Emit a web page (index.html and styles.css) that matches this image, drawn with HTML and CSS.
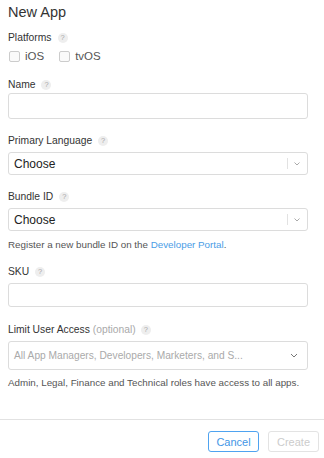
FILE: index.html
```html
<!DOCTYPE html>
<html>
<head>
<meta charset="utf-8">
<link rel="stylesheet" href="styles.css">
</head>
<body>
<div class="page">
  <div class="form">
    <h1 class="title">New App</h1>

    <div class="label label-platforms">Platforms <span class="help">?</span></div>
    <div class="checks">
      <label class="check"><span class="box"></span>iOS</label>
      <label class="check"><span class="box"></span>tvOS</label>
    </div>

    <div class="label">Name <span class="help">?</span></div>
    <div class="input input-name"></div>

    <div class="label">Primary Language <span class="help">?</span></div>
    <div class="select">
      <span class="value">Choose</span>
      <span class="sep"></span>
      <svg class="chev" width="6" height="4" viewBox="0 0 6 4"><polyline points="0.5,0.5 3,3 5.5,0.5" fill="none" stroke="#aaa" stroke-width="1"/></svg>
    </div>

    <div class="label">Bundle ID <span class="help">?</span></div>
    <div class="select">
      <span class="value">Choose</span>
      <span class="sep"></span>
      <svg class="chev" width="6" height="4" viewBox="0 0 6 4"><polyline points="0.5,0.5 3,3 5.5,0.5" fill="none" stroke="#aaa" stroke-width="1"/></svg>
    </div>
    <p class="note note-bundle">Register a new bundle ID on the <a class="link">Developer Portal</a>.</p>

    <div class="label label-sku">SKU <span class="help">?</span></div>
    <div class="input input-sku"></div>

    <div class="label label-limit">Limit User Access <span class="optional">(optional)</span> <span class="help">?</span></div>
    <div class="select select-multi">
      <span class="placeholder">All App Managers, Developers, Marketers, and S...</span>
      <svg class="chev chev-dark" width="8" height="5" viewBox="0 0 8 5"><polyline points="1,1 4,4 7,1" fill="none" stroke="#777" stroke-width="1"/></svg>
    </div>
    <p class="note note-admin">Admin, Legal, Finance and Technical roles have access to all apps.</p>
  </div>

  <div class="footer">
    <button class="btn btn-cancel">Cancel</button>
    <button class="btn btn-create">Create</button>
  </div>
</div>
</body>
</html>
```

FILE: styles.css
```css
html, body {
  margin: 0;
  padding: 0;
  background: #fff;
}
body {
  font-family: "Liberation Sans", Arial, sans-serif;
  color: #333;
  width: 324px;
  height: 458px;
  overflow: hidden;
}
.page {
  display: flex;
  flex-direction: column;
}
.form {
  padding-left: 8px;
  width: 300px;
}
.title {
  margin: 0;
  padding-top: 3px;
  font-size: 14.5px;
  font-weight: normal;
  line-height: 18px;
  color: #333;
}
.label {
  display: flex;
  align-items: center;
  font-size: 10.3px;
  line-height: 14px;
  height: 14px;
  color: #333;
  margin-top: 15px;
}
.label-platforms { margin-top: 10px; }
.label-sku { margin-top: 13px; }
.label-limit { margin-top: 16px; }
.help {
  display: inline-flex;
  align-items: center;
  justify-content: center;
  width: 10px;
  height: 10px;
  border-radius: 50%;
  background: #eee;
  color: #a8a8a8;
  font-size: 7.5px;
  line-height: 10px;
  margin-left: 6px;
}
.optional {
  color: #aaa;
  margin-left: 3px;
  margin-right: -1px;
}
.checks {
  display: flex;
  gap: 14px;
  margin-top: 4px;
  height: 14px;
  align-items: center;
}
.check {
  display: flex;
  align-items: center;
  font-size: 11.5px;
  color: #555;
}
.box {
  width: 9px;
  height: 9px;
  border: 1px solid #ccc;
  border-radius: 2px;
  background: #fafafa;
  margin-left: 1px;
  margin-right: 5px;
}
.input {
  box-sizing: border-box;
  width: 300px;
  border: 1px solid #dcdcdc;
  border-radius: 3px;
  background: #fff;
}
.input-name {
  height: 26px;
  margin-top: 1px;
}
.input-sku {
  height: 24px;
  margin-top: 4px;
}
.select {
  box-sizing: border-box;
  width: 300px;
  height: 23px;
  margin-top: 4px;
  border: 1px solid #dcdcdc;
  border-radius: 3px;
  display: flex;
  align-items: center;
  padding-left: 5px;
}
.value {
  flex: 1;
  font-size: 12px;
  color: #222;
}
.sep {
  width: 1px;
  height: 11px;
  background: #e2e2e2;
  margin-right: 6px;
}
.chev {
  margin-right: 7px;
}
.select-multi {
  height: 29px;
}
.placeholder {
  flex: 1;
  font-size: 10.2px;
  color: #aaa;
}
.chev-dark {
  margin-right: 9px;
}
.note {
  margin: 0;
  font-size: 9.8px;
  line-height: 14px;
  color: #555;
}
.note-bundle { margin-top: 7px; }
.note-admin { margin-top: 6px; }
.link {
  color: #4a9de6;
  text-decoration: none;
}
.footer {
  margin-top: 29px;
  border-top: 1px solid #e2e2e2;
  padding-top: 11px;
  padding-right: 5px;
  display: flex;
  justify-content: flex-end;
  gap: 9px;
}
.btn {
  box-sizing: border-box;
  width: 51px;
  height: 21px;
  border-radius: 3px;
  background: #fff;
  font-family: "Liberation Sans", Arial, sans-serif;
  font-size: 11px;
  padding: 0;
}
.btn-cancel {
  border: 1px solid #4fa3f0;
  color: #3f96e6;
}
.btn-create {
  border: 1px solid #e3e3e3;
  color: #ccc;
}
```
